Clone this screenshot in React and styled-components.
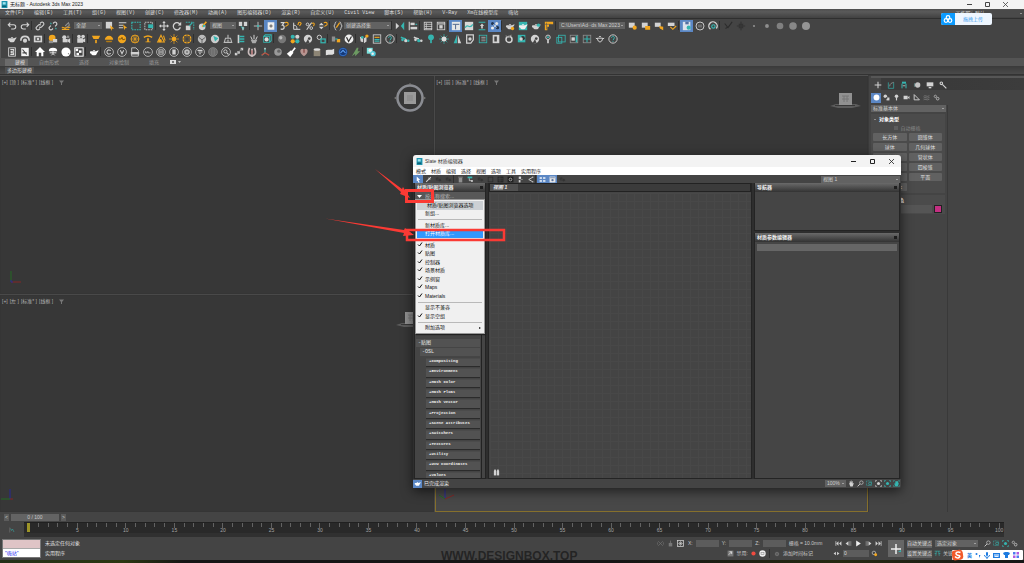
import React from "react";
import styled, { createGlobalStyle, css } from "styled-components";

const W = "#d2d2d2";
const T = "#35b5b0";
const O = "#f2a61e";
const G = "#8f8f8f";

const Global = createGlobalStyle`
  *, *::before, *::after { box-sizing: border-box; }
  body { margin: 0; background: #444; overflow: hidden; }
  #root { min-height: 100vh; display: flex; flex-direction: column; }
  body, button, input, select {
    font-family: "Liberation Sans", "Noto Sans CJK SC", sans-serif;
    font-size: 5px;
    line-height: 7px;
  }
  button { border: 0; padding: 0; margin: 0; background: none; color: inherit; text-align: left; }
  a { color: inherit; text-decoration: none; }
  ul { list-style: none; margin: 0; padding: 0; }
  h2, h3, p { margin: 0; font-size: inherit; }
`;

/* ---------- icons, drawn on a 12 x 12 grid ---------- */
const ln = (d, c = W, w = 1.3, extra = {}) => (
  <path d={d} fill="none" stroke={c} strokeWidth={w} {...extra} />
);
const fl = (d, c = W) => <path d={d} fill={c} />;
const dot = (x, y, r, c = W) => <circle cx={x} cy={y} r={r} fill={c} />;
const ring = (x, y, r, c = W, w = 1.1) => (
  <circle cx={x} cy={y} r={r} fill="none" stroke={c} strokeWidth={w} />
);
const box = (x, y, w, h, c = W) => <rect x={x} y={y} width={w} height={h} fill={c} />;
const frame = (x, y, w, h, c = W, s = 1) => (
  <rect x={x} y={y} width={w} height={h} fill="none" stroke={c} strokeWidth={s} />
);
const pot = (c = W) => fl("M3 5h5.500c1 0 1.500-1 3-1-.4 2-1.300 2.500-2 3.500C9 9.500 8 10 6 10S3 9.500 2.700 8C1 8 .5 5.500 2 5zM5 3.500h2L7.500 4.500h-3z", c);

const ICONS = {
  undo: ln("M4 2L1.500 4.500L4 7M1.500 4.500H8a2.500 2.500 0 0 1 0 5H5"),
  redo: ln("M8 2l2.500 2.500L8 7M10.500 4.500H4a2.500 2.500 0 0 0 0 5h3"),
  link: ln("M5 7a2 2 0 0 0 3 0l2-2a2 2 0 0 0-3-3L6 3M7 5a2 2 0 0 0-3 0L2 7a2 2 0 0 0 3 3l1-1"),
  unlink: <>{ln("M6 3l1-1a2 2 0 0 1 3 3L8.500 6.500M3.500 5.500L2 7a2 2 0 0 0 3 3l1-1")}{ln("M3 2l1 2M9 8l1 2", T)}</>,
  bind: <>{ln("M1 8c2-2 3 2 5 0s3 1 5-1M1 10h9", O)}{ln("M5 6l4-4 1 3-3 3", G)}</>,
  pick: <>{box(1, 1, 7.500, 8)}{fl("M6 5l5 4-2.500.3L7.500 12z", O)}</>,
  pickName: <>{ln("M1 2h9M1 5h5M1 8h5")}{fl("M6 4l5 4.500-2.500.3L7.500 11z", O)}</>,
  marquee: ln("M1 1.500h10v9H1z", T, 1.3, { strokeDasharray: "2 1" }),
  crossing: <>{ln("M1 1.500h9v9H1z", W, 1, { strokeDasharray: "2 1" })}{box(5, 4, 6, 4.500, T)}</>,
  move: <>{ln("M6 1v10M1 6h10")}{fl("M6 0l2 2.500H4zM6 12l2-2.500H4zM0 6l2.500-2v4zM12 6L9.500 4v4z")}</>,
  rotate: <>{ln("M9.500 4A4.300 4.300 0 1 0 10 7.500", W, 1.5)}{fl("M11 1v4.500H7z")}</>,
  scale: <>{ln("M1 1.500h9.500v9", T, 1.1, { strokeDasharray: "2 1" })}{box(1, 5.500, 5.500, 5.500)}{ln("M5 6l4-4", T)}</>,
  place: <>{dot(5, 7, 4)}{ln("M5 7L10 1", O, 2)}{dot(7, 6, 1.4, T)}</>,
  pivot: <>{box(1, 1, 4, 5)}{box(7, 1, 4, 5)}{fl("M3 7v4M6 11L3 6l5 2z", T)}{ln("M6 11V7", W)}</>,
  manip: <>{ln("M6 1v10M1 6h10", W, 1)}{dot(6, 6, 1.3, T)}</>,
  keys: <>{box(2, 1.500, 8, 9, "#efefef")}{ln("M6 4v4M4 6h4", "#444", 1)}</>,
  snap3: <>{ln("M2 2h4L4 5c3 0 3 5-.5 5L2 9.500", W, 1.5)}{ln("M7 2c3-1 4 0 4 2S8 5 8 7", O, 1.3)}</>,
  snapA: <>{ln("M2 2v8h8M2 5c3 0 4 2 4 5", W, 1.2)}{ln("M7 5l1-3c1-1 3 0 3 1L9 6", O, 1.3)}</>,
  snapP: <>{ring(3, 4, 1.600)}{ring(7.500, 8.500, 1.600)}{ln("M2 10.500L8 2")}{ln("M8 3c3-2 4 1 2 3", O)}</>,
  snapS: <>{fl("M1 5l3-3 3 3zM1 7h6l-3 3z")}{ln("M7 2c3-1 4 0 4 2S8 5 8 7", O, 1.3)}</>,
  sets: <>{ln("M4 1C2 1 3 5 1 6c2 1 1 5 3 5M8 1c2 0 1 4 3 5-2 1-1 5-3 5", W, 1.1)}{ln("M4 8l4-6", O, 1.5)}</>,
  mirror: <>{fl("M1 2l4 4-4 4z")}{fl("M11 1v10L7 6z", T)}</>,
  align: <>{ln("M1.500 1v10")}{box(3, 2, 5, 3)}{box(3, 7, 8, 3)}{ln("M9 4h2", T)}</>,
  layers: <>{frame(1.500, 1.500, 9, 9)}{ln("M2 4h9M2 6.500h9M2 9h9M4 2v8", W, .9)}</>,
  layer2: <>{frame(1.500, 1.500, 9, 9)}{box(4, 5, 4, 4)}{ln("M2 3.500h9")}</>,
  ribbon: <>{box(1, 1, 10, 10, "#e7e7e7")}{ln("M2 4h8M5.500 4v6", "#556b90", 1.2)}</>,
  curve: <>{box(1, 1, 10, 10, "#d8d8d8")}{ln("M1.500 8c3-6 5 3 9-4", T, 1.5)}</>,
  schem: <>{ln("M2 1.500h8M2 10.500h8", T, 1.2)}{fl("M6 3l2.500 3h-5zM5 5h2v4H5z")}</>,
  mat: <>{dot(3, 3, 1.800, "#21344f")}{dot(8, 3, 1.800, "#e5e5e5")}{dot(3, 8.500, 1.800, "#eee")}{dot(9, 8, 2, "#21344f")}{ln("M4 4l4 4M4 8l4-4", "#e5e5e5", .8)}</>,
  potGear: <>{pot()}{dot(9, 9, 2, O)}</>,
  potFrame: <>{box(1, 1, 10, 10, T)}{pot("#eee")}</>,
  potT: <>{pot()}{dot(9, 5, 2, T)}</>,
  potG: pot("#d5d5d5"),
  state: <>{fl("M1 1h10v3H6v3H4v4H1z", O)}{ln("M3 2v8M1 4h8", "#555", .7)}</>,
  box1: <>{box(1, 2, 7, 6)}{dot(8, 8, 2.500, O)}</>,
  box2: <>{box(1, 2, 7, 6)}{box(5, 6, 6, 4.500, O)}</>,
  box3: <>{box(1, 2, 7, 5)}{fl("M6 6l5 1v4l-4-2z", O)}</>,
  box4: <>{box(1, 2, 8, 4)}{ln("M4 7l3 3 4-4", O)}</>,
  save: <>{box(1, 1, 9, 10, "#dde3ec")}{box(4, 1, 4, 3, "#536f9f")}{dot(8, 8, 2.500, T)}</>,
  ringB: <>{ring(6, 6, 4.800)}{ln("M3.500 5h5M3.500 7h5", G, 1)}</>,
  ringT: <>{ln("M3 10a5 5 0 1 1 7-1", W, 1.6)}{ring(6.500, 6.500, 2, T, 1.4)}</>,
  dBrush: ln("M2 3l4 5 5-7M3 9l3-2", "#2c2c2c"),
  dMove: ln("M6 1v10M1 6h10M4 4h4v4H4z", "#333"),
  s1: dot(6, 6, 1.300, G), s2: dot(6, 6, 2.300, G), s3: dot(6, 6, 4, "#808080"),
  s4: dot(6, 6, 4.500, "#888"), s5: dot(6, 6, 4.800, "#959595"),
  cloud: <>{ln("M1 8c0-7 10-7 10 0", W, 2)}{dot(6, 8, 2.500)}</>,
  cam: <>{box(1, 2, 10, 8)}{box(3, 4, 6, 4, "#444")}{dot(6, 6, 1.600)}</>,
  coins: <>{dot(5, 5, 4, O)}{box(6, 6, 5, 4)}{box(1, 8, 5, 3, G)}</>,
  film: <>{dot(4, 4, 2.500)}{box(2, 6, 6, 4)}{fl("M8 7l3-2v6L8 9z")}{dot(8.500, 3.500, 1.600, G)}</>,
  movie: <>{dot(3.500, 3, 2.200)}{dot(8.500, 3, 2.200)}{box(1.500, 5, 7, 5.500)}{fl("M8 7l3-2v5L8 9z")}</>,
  lamp: <>{fl("M1 2h10l-2 4H3z", O)}{box(5, 7, 2, 4, O)}</>,
  dome: <>{fl("M1 7a5 5 0 0 1 10 0z", O)}{fl("M2 8h8l-1 2H3z", "#b17a15")}</>,
  orb: <>{dot(6, 6, 5, O)}{ln("M2 6h3l1-2 1 3 3-1", "#6b4a0e", 1)}</>,
  mesh: <>{ring(6, 6, 4.700, O)}{ln("M1 6h10M6 1v10M3 2l6 8M9 2L3 10", O, .8)}</>,
  plane: <>{ln("M1 4c3-2 7-2 10 0", O, 1.8)}{fl("M5 5h2v5H5zM3 9h6v1H3z", O)}</>,
  ies: <>{ln("M6 1.500l4 8H2z", O)}{dot(5, 8, 2, O)}{ln("M9 2l2 6", O)}</>,
  sun: <>{dot(6, 6, 2.600, O)}{ln("M6 0v12M0 6h12M2 2l8 8M10 2l-8 8", O, .8)}</>,
  sun2: <>{ring(6, 6, 2.600, O, .8)}{ring(6, 6, 4.600, O, 1.600)}{ln("M6 0v12M0 6h12M2 2l8 8M10 2l-8 8", "#444", .8)}{dot(6, 6, 2, "#444")}</>,
  ball: <>{dot(6, 6, 5, "#bbb")}{ln("M2 4l4 3 4-3M6 7v4", "#555", 1)}</>,
  ballT: <>{dot(6, 6, 5, "#ccc")}{fl("M4 2l6 3-4 4z", T)}</>,
  cone: <>{ln("M6 1v4M3 5h6l1.500 5h-9z", "#bbb")}{dot(6, 8, 1.500, G)}</>,
  tree: <>{fl("M2 1h2v10H2z")}{ln("M4 3h6M4 6h6M4 9h6", T, 1.6)}</>,
  fur: <>{ln("M2 3l2 4M6 1v5M10 3L8 7", W, 1.2)}{fl("M2 7h8l-2 4H4z", "#aaa")}</>,
  cube: <>{frame(2, 3, 7, 7, T)}{ln("M2 3l2-2h7v7L9 10", T)}{dot(5.500, 6.500, 2.500, "#ddd")}</>,
  sphere: <>{dot(6, 6, 5, "#777")}{dot(4.500, 4.500, 2, "#bdbdbd")}</>,
  four: <>{dot(3.300, 3.300, 2.500, T)}{dot(8.800, 3.300, 2.500)}{dot(3.300, 8.800, 2.500, O)}{dot(8.800, 8.800, 2.500, T)}</>,
  pie: <>{dot(6, 6, 5)}{dot(7.500, 5.500, 1.600, "#444")}{fl("M6 6l2 5H3z", "#444")}</>,
  chain: <>{ring(4, 4, 2.600)}{frame(6, 6, 5, 4.500, T, 1.5)}</>,
  conv: <>{box(1, 3, 4, 6, G)}{box(7, 6, 4, 4, O)}{ln("M5 6h3", T)}</>,
  vray: <>{dot(6, 6, 5.300, "#eee")}{ln("M3 4l2.500 5L9 3", "#333", 1.5)}</>,
  light3: <>{fl("M1 3l4 2v5L2 9zM6 5l3-2v6l-3 2z")}{dot(9.500, 2.500, 2, O)}{dot(4, 4, 1.600, T)}</>,
  notes: <>{frame(1.500, 1, 9, 10)}{ln("M3 4h6", O)}{ln("M3 6.500h6M3 8.500h6", T)}</>,
  help: <>{ring(6, 6, 5)}{ln("M4.300 4.500c0-2.500 3.500-2 3.400 0C7.700 6 6 6 6 7.500M6 8.500v1", T, 1.2)}</>,
  ani1: <>{ln("M1 4l3 1 3 1", T, 2)}{dot(3, 7, 1.600, T)}{dot(7, 8, 2)}{dot(10, 8, 1.500, T)}</>,
  ani2: <>{ln("M1 4l3 1 3 1", W, 2)}{dot(3, 7, 1.600, W)}{dot(7, 8, 2, T)}{dot(10, 8, 1.500)}</>,
  bulbT: <>{dot(6, 4, 3.500, T)}{box(5, 7, 2, 4, T)}</>,
  sunW: <>{ln("M6 0v12M0 6h12M2 2l8 8M10 2l-8 8", T, .8)}{dot(6, 6, 3, "#ddd")}</>,
  coneT: <>{fl("M6 1v10H2z", T)}{fl("M7 1v10h4z", W)}</>,
  clip: <>{ln("M2 1h8v6L7 11H2z", W, 1.5)}{dot(6, 6, 2)}</>,
  list: <>{frame(1.500, 1.500, 9, 9, T)}{ln("M4 4h5M4 6h5M4 8h5", G)}</>,
  door: <>{box(2, 1, 8, 10)}{box(4, 3, 3, 6, "#444")}</>,
  swirl: <>{ring(6, 6.500, 3.600, W, 1.800)}{ln("M2 2l3 2 4-3", G)}</>,
  tOrb: <>{box(1, 1, 9, 9, T)}{dot(7, 5, 2.500, "#333")}{dot(5, 6, 2)}</>,
  bulb: <>{ring(6, 4, 2.700)}{ln("M6 7v4", W, 2)}{dot(6, 4, 1.200, T)}</>,
  win: <>{frame(3, 1.500, 8, 8, T)}{frame(1, 4, 6, 7, T)}</>,
  win2: <>{frame(1.500, 1.500, 9, 9, G)}{box(3, 4, 4, 4)}{box(8, 2, 2, 8, T)}</>,
  gridT: <>{frame(1.500, 1.500, 9, 9, G)}{ln("M6 2v8M2 6h8", T)}</>,
  pot2: ln("M3 5h6c0 6-6 6-6 0zM9 6l2-1M3 6L1 5M5 3h2", W, 1.2),
  docS: <>{frame(2, 1, 8, 10, "#ddd")}{ln("M4 3h4v2H5v2h3v2H4", "#ddd")}</>,
  docX: <>{box(1.500, 1, 9, 10, "#f4f4f4")}{ln("M3 3l5 6M3 7h5", "#444", 1.400)}</>,
  house: fl("M6 0l6 6h-2v5H7.500V7h-3v4H2V6H0z", "#fff"),
  table: <>{fl("M1 5a5 4 0 0 1 10 0z", "#fff")}{ln("M6 5v3M2 7h8M4 10l2-2 2 2", "#fff", 1)}</>,
  white: <>{dot(6, 6, 5.500, "#fff")}{dot(9, 8, .8, "#888")}</>,
  checker: <>{frame(1, 1, 10, 10, "#fff", 1.200)}{box(2, 2, 3, 3, "#fff")}{box(6, 4, 3, 3, "#fff")}{box(3, 7, 3, 3, "#fff")}</>,
  potW: pot("#fff"),
  cC: <>{ring(6, 6, 5.300, W, .9)}{ln("M8 4.500a2.500 2.500 0 1 0 0 3")}</>,
  cV: <>{ring(6, 6, 5.300, W, .9)}{ln("M4 4l2 4 2-4")}</>,
  file: <>{ln("M2 11V1h5l3 3v7z", W, 1)}{box(1, 6, 10, 3)}</>,
  cLine: <>{ring(6, 6, 5.300, W, .9)}{ln("M3 5v2h2V5M6 5v2h3", W, .8)}</>,
  cBox: <>{ring(6, 6, 5.300, W, .9)}{frame(3.500, 3.500, 5, 5)}{ln("M4 6h4")}</>,
  cGrid: <>{ring(6, 6, 5.300, W, .9)}{box(4, 3, 4, 6)}</>,
  cFlower: <>{ring(6, 6, 5.300, W, .9)}{dot(6, 6, 3.400, "#bbb")}{dot(6, 6, 1, "#444")}</>,
  cQ: <>{ring(6, 6, 5.300, W, .9)}{ln("M3 4h6M4 6h5M5 8h2", W)}</>,
  cHatch: <>{dot(6, 6, 5, "#686868")}{ring(6, 6, 5.300, "#999", .8)}{ln("M4 2v8M6 1v10M8 2v8", "#999", .5)}</>,
  cSearch: <>{ring(6, 6, 5.300, W, .9)}{ring(5.300, 5.300, 1.900)}{ln("M7 7l2 2")}</>,
  steps: <>{box(1, 7, 3, 3)}{box(4, 5, 3, 3)}{box(8, 1, 3, 3)}{ln("M3 8l7-6", G, 1)}</>,
  horse: <>{ln("M3 1C0 8 3 10 6 11c3-1 6-3 3-10M6 2v8", "#c9bcbc", 2)}{ln("M6 4v5", "#b05a5a")}</>,
  axis: <>{ln("M6 1v6l-4 3", T)}{ln("M6 7l5 3M6 7l-4 3", "#c0503f", 1.5)}{dot(6, 2, 1)}</>,
  stone: <>{dot(6, 6, 4.500, "#999")}{dot(7, 5, 2, "#666")}</>,
  brush: <>{fl("M1 8l5-4 3 3-4 5z", "#fff")}{ln("M7 6l4-5", "#fff", 2)}</>,
  heart: <>{fl("M6 11C0 7 1 2 4 2l2 1 2-1c3 0 4 5-2 9z", "#b79490")}{ln("M6 3v4", "#7c3b38")}</>,
  pail: <>{fl("M2 3h8v8H2z", "#8d8575")}<ellipse cx="6" cy="3" rx="4" ry="1.500" fill="#ddd" /></>,
  paper: fl("M1 4c3-2 5 1 10-2v6c-4 3-6 0-10 2z", "#dedede"),
  okay: <>{dot(6, 6, 5.500, "#163a78")}{ring(6, 6, 4.500, "#3b78cf", 1)}{ln("M3 7l3-3 3 3", "#5b9dee")}</>,
  leaf: fl("M1 11L7 1h2L8 5l3 0-6 6 0-3z", "#6c9a62"),
  globes: <>{box(1, 1, 7, 7, "#7de4e0")}{dot(8.500, 8, 3.200, "#50c8d8")}{dot(5, 4, 2, "#eee")}{dot(8, 8, 1.500, "#eee")}</>,
  plus: ln("M6 1v10M1 6h10", W, 1.6),
  modify: <>{ln("M2 2v9h8V2", T, 1)}{ln("M4 8c0-4 3-5 6-6", G)}</>,
  hier: <>{box(3, 1, 6, 3, T)}{ln("M3 4v7M9 4v7", T, 1.500)}{box(4, 6, 4, 2, G)}</>,
  motion: <>{dot(7, 6, 4, "#c4c4c4")}{ln("M3 3a5 5 0 0 0 0 6", "#6b8f8e")}</>,
  display: <>{box(1, 2, 10, 6)}{box(4, 9, 4, 2)}</>,
  wrench: <>{ring(3.500, 3.500, 1.900, W, 1.6)}{ln("M5 5l6 6", W, 1.8)}</>,
  disc: dot(6, 6, 5, "#fff"),
  shapes: <>{dot(4, 4, 3)}{box(6, 6, 5, 5)}{dot(6, 7, 1.500, "#444")}</>,
  bulbS: <>{dot(6, 4, 3)}{box(5, 6, 2, 5)}</>,
  video: <>{box(1, 3, 7, 6)}{fl("M8 6l3-3v6z")}</>,
  tri: ln("M2 1v9h9z", W, 1.6),
  waves: ln("M1 4c3-3 5 2 10-1M1 7c3-3 5 2 10-1M1 10c3-3 5 2 10-1", G, 1),
  gears: <>{ring(4, 4, 2, "#aaa", 1.500)}{ring(8, 8, 2.300, "#bbb", 1.500)}</>,
  cursor: fl("M3 1l6 6H6l2 4-2 .5L4.500 8 3 9z", "#fff"),
  dropper: ln("M2 10l5-5M6 3l3 3M8 4l2-2", W, 1.8),
  ghost: <>{dot(4, 5, 3, "#363636")}{dot(8, 7, 3, "#333")}{ring(8, 7, 3, "#4c4c4c", .8)}</>,
  trash: <>{box(3, 3, 6, 8, G)}{ln("M2 2h8", G)}</>,
  assign: <>{box(1, 1, 8, 3, T)}{ln("M4 4v4h4", W)}{box(7, 7, 3, 3)}</>,
  darkF: frame(2, 2, 8, 8, "#2d2d2d", 1.3),
  darkG: <>{box(1, 1, 10, 10, "#292929")}{ln("M2 4h8M2 7h8M5 1v10", "#565656", .7)}</>,
  zero: <>{box(1, 1, 10, 10, "#222")}{ring(6, 6, 2.300)}</>,
  treeV: <>{box(3, 1, 4, 4)}{box(3, 7, 3, 4)}{ln("M6 6h4", G)}</>,
  share: ln("M10 2L3 6l7 4M10 1v2M10 9v2", W, 1.5),
  grid4: <>{box(1, 2, 4, 3, "#dbe5f2")}{box(7, 2, 4, 3, "#dbe5f2")}{box(1, 7, 4, 3, "#dbe5f2")}{box(7, 7, 4, 3, "#dbe5f2")}</>,
  preview: <>{box(1, 1, 10, 10, "#e8e8e8")}{dot(6, 7, 2, "#58739f")}{ln("M2 3h8", "#58739f")}</>,
  binoc: <>{box(1.500, 3, 4, 8)}{box(6.500, 3, 4, 8)}{box(2, 1, 3, 3)}{box(7, 1, 3, 3)}</>,
  hand: fl("M3 5V2h1v3l1-4h1v4l1-3h1v4l2-1-2 6H4L2 6z"),
  zoom: <>{ring(7.500, 4.500, 3)}{ln("M5 7l-4 4", W, 1.600)}</>,
  zoomR: <>{ln("M1 1.500h8v8H1z", T, 1, { strokeDasharray: "1.500 1" })}{ring(7, 6, 2.500, T)}</>,
  zoomE: <>{ln("M1 3V1h2M9 1h2v2M11 9v2H9M3 11H1V9", W)}{dot(6, 6, 2.600)}</>,
  zoomET: <>{ln("M1 3V1h2M9 1h2v2M11 9v2H9M3 11H1V9", T, 1.400)}{dot(6, 6, 2.600, T)}</>,
  handT: <>{ln("M1 3V1h2M9 1h2v2M11 9v2H9M3 11H1V9", T, 1)}{fl("M4 2h5v3l1 1-2 5H4L2 6h2z", T)}</>,
  isolate: ln("M2 2l8 8M10 2l-8 8M1 4v4M11 4v4", "#777", 1),
  lock: <>{box(3, 5, 6, 6, "#777")}{ln("M6 1v5", "#777")}</>,
  transf: <>{frame(1, 1, 10, 10, W, 1.3)}{ln("M6 2v8M2 6h8M3 3l6 6M9 3l-6 6", W, 1)}</>,
  first: <>{ln("M1.500 2v8", W)}{fl("M6 2v8L2 6zM11 2v8L7 6z")}</>,
  prev: <>{fl("M6 2v8L1 6z")}{ln("M8 2v8M10 2v8", G)}</>,
  play: fl("M2 1l8 5-8 5z", "#eee"),
  next: <>{fl("M6 2v8l5-4z")}{ln("M2 2v8M4 2v8", G)}</>,
  last: <>{ln("M10.500 2v8")}{fl("M1 2v8l4-4zM6 2v8l4-4z")}</>,
  pair: fl("M5 3v6L1 6zM7 3v6l4-3z"),
  cfg: <>{ring(5, 5, 3)}{dot(8, 8, 2.500, O)}</>,
  rec: dot(6, 6, 5, "#f04b40"),
  whiteBox: <>{dot(6, 6, 5.500, "#eee")}{frame(3.500, 4, 5, 4, "#888")}</>,
  degrade: <>{box(1, 1, 10, 10, "#777")}{ln("M3 8L8 3M4 3h4v4", "#eee")}</>,
  tag: <>{ring(6, 6, 3.500, G)}{dot(6, 6, 1.400, G)}</>,
  keyT: ln("M1 2h10M3 10l1-8M8 2l1 8M1 6h3M8 6h3", T, 1),
  app: <>{box(1, 0, 10, 12, "#1c93ad")}{box(3, 2, 5, 4, "#9fe3ee")}{box(2, 8, 7, 2, "#0b5566")}</>,
  curveT: <>{ln("M1.500 1v10", G, .8)}{ln("M3 3l2 4 2-3 3 6", T, 1)}</>,
};

const Svg = styled.svg`
  display: block;
  flex: none;
  width: ${(p) => p.$size}px;
  height: ${(p) => p.$size}px;
`;
const Icon = ({ name, size = 10 }) => (
  <Svg viewBox="0 0 12 12" $size={size} aria-hidden="true">{ICONS[name]}</Svg>
);

/* ---------- shared controls ---------- */
const row = css`display: flex; align-items: center;`;

const ToolButton = styled.button`
  ${row}
  justify-content: center;
  flex: none;
  width: ${(p) => p.$w || 13}px;
  height: ${(p) => p.$h || 12}px;
  background: ${(p) => (p.$on ? "#5b87c4" : "transparent")};
`;
const Sep = styled.span`
  flex: none;
  width: 1px;
  height: 9px;
  margin-right: 1px;
  background: #2f2f2f;
`;
const SelectBox = styled.span`
  position: relative;
  flex: none;
  display: flex;
  width: ${(p) => p.$w};
  height: ${(p) => p.$h || 7}px;
  margin: ${(p) => p.$m || "0"};
  background: ${(p) => p.$bg || "#626262"};
  color: ${(p) => p.$fg || "#cfcfcf"};
  &::after {
    content: "";
    position: absolute;
    right: 2px;
    top: 3px;
    border: 1px solid transparent;
    border-top-color: #ddd;
    border-bottom: 0;
  }
  select {
    appearance: none;
    width: 100%;
    border: 0;
    margin: 0;
    padding: 0 5px 0 2px;
    background: none;
    color: inherit;
    outline: 0;
  }
`;
const Select = ({ label, value, ...rest }) => (
  <SelectBox {...rest}>
    <select aria-label={label} defaultValue={value}><option>{value}</option></select>
  </SelectBox>
);

/* ---------- application chrome ---------- */
const Shell = styled.div`
  position: relative;
  flex: 1;
  display: flex;
  flex-direction: column;
  color: #c9c9c9;
  background: #444;
`;
const TitleBar = styled.header`
  ${row}
  height: 9px;
  padding: 0 16px 0 1px;
  gap: 2px;
  background: #f3f3f3;
  color: #222;
`;
const WindowControls = styled.div`
  ${row}
  margin-left: auto;
  gap: ${(p) => p.$gap}px;
`;
const WinButton = styled.button`
  width: 5px;
  height: 5px;
  svg { display: block; width: 5px; height: 5px; }
`;
const MenuBar = styled.nav`
  ${row}
  height: 10px;
  padding-left: 5px;
  background: linear-gradient(#4e4e4e, #5a5a5a 30%, #414141);
  color: #dcdcdc;
  border-bottom: 1px solid #2f2f2f;
  button { margin-right: 10px; font-family: "Liberation Mono", "Noto Sans CJK SC", monospace; white-space: nowrap; }
`;
const Workspace = styled.label`
  ${row}
  margin-left: auto;
  gap: 1px;
`;
const Toolbars = styled.div`
  padding-left: 4px;
  border-left: 1px solid #5a5a5a;
  background: #444;
`;
const ToolRow = styled.div`
  ${row}
  height: 13px;
`;
const RibbonTabs = styled.div`
  ${row}
  height: 8px;
  padding-left: 5px;
  background: #545454;
  color: #999;
`;
const RibbonTab = styled.button`
  height: 7px;
  width: ${(p) => p.$w}px;
  padding-left: ${(p) => (p.$on ? 10 : 1)}px;
  margin-right: ${(p) => p.$gap}px;
  background: ${(p) => (p.$on ? "#6b6b6b" : "none")};
  color: ${(p) => (p.$on ? "#ddd" : "inherit")};
`;
const RibbonPanel = styled.div`
  ${row}
  height: 9px;
  padding-left: 5px;
  background: linear-gradient(#3a3a3a, #4a4a4a);
  border-bottom: 1px solid #333;
  button { background: #505050; padding: 0 2px; color: #ddd; }
`;

const Main = styled.main`
  display: flex;
  flex: 1;
  min-height: 0;
`;
const Viewports = styled.div`
  flex: 1;
  display: grid;
  grid-template: 1fr 1fr / 1fr 1fr;
  gap: 1px;
  background: #494949;
  border-top: 1px solid #4f4f4f;
`;
const Viewport = styled.section`
  position: relative;
  display: flex;
  flex-direction: column;
  background: ${(p) => (p.$active ? "#484848" : "#373737")};
  border: 1px solid ${(p) => (p.$active ? "#86702c" : "#353535")};
`;
const ViewLabel = styled.h2`
  ${row}
  gap: 2px;
  padding: 2px 1px;
  color: #b2b2b2;
  font-weight: 400;
  white-space: nowrap;
  svg { margin-left: 4px; }
`;
const Cube = styled.svg`
  position: absolute;
  right: ${(p) => p.$right}px;
  top: ${(p) => p.$top}px;
  width: 32px;
  height: 30px;
`;
const AxisMark = styled.svg`
  width: 20px;
  height: 18px;
  margin-top: auto;
  margin-bottom: ${(p) => p.$bottom}px;
`;

const RoundCube = () => (
  <Cube viewBox="0 0 32 30" $right={7} $top={6}>
    <circle cx="16" cy="15" r="12.500" fill="none" stroke="#8a8c92" strokeWidth="2.500" />
    <path d="M16 0l2 2h-4zM0 15l3-2v4zM32 15l-3-2v4z" fill="#777" />
    <rect x="10" y="9" width="12" height="12" fill="#9a9a9a" />
    <path d="M14 12v6M16 12v6M18 12v6" stroke="#858585" />
  </Cube>
);
const FlatCube = () => (
  <Cube viewBox="0 0 32 30" $right={6} $top={6}>
    <path d="M1 23l6-2h20l5 2-9 2H9z" fill="#5c5c5c" />
    <path d="M6 22h20v1H6z" fill="#383838" />
    <rect x="10" y="10" width="13" height="12" fill="#919191" />
    <path d="M13 13h7M13 16h7M15 13v6M18 13v6" stroke="#777" />
  </Cube>
);

const Panel = styled.aside`
  display: flex;
  flex-direction: column;
  width: 156px;
  padding-left: 2px;
  border-top: 1px solid #3b3b3b;
  border-left: 1px solid #3a3a3a;
  background: #444;
`;
const PanelTabs = styled.div`
  ${row}
  height: 14px;
  padding-top: 2px;
  background: linear-gradient(90deg, #444 10px, #3a3a3a 10px 76px, #3c3c3c);
  border-top: 2px solid #565656;
`;
const PanelCats = styled.div`
  ${row}
  height: 15px;
`;
const PanelColumn = styled.div`
  flex: 1;
  width: 77px;
  border-right: 1px solid #393939;
`;
const Rollout = styled.section`
  width: 74px;
  margin-top: 2px;
  padding: 2px 3px 0 2px;
  background: #4b4b4b;
  h3 { color: #fff; padding-left: 6px; position: relative; }
  h3::before { content: ""; position: absolute; left: 1px; top: 3px; border: 1px solid transparent; border-top-color: #ccc; }
`;
const AutoGrid = styled.label`
  ${row}
  justify-content: center;
  gap: 2px;
  height: 10px;
  color: #858585;
  input { appearance: none; margin: 0; width: 4px; height: 4px; background: #5d5d5d; }
`;
const ObjectGrid = styled.div`
  display: grid;
  grid-template-columns: 1fr 1fr;
  gap: 2px;
  padding-bottom: 2px;
  button { height: 8px; background: #616161; text-align: center; color: #ddd; border-radius: 1px; }
`;
const NameRow = styled.div`
  ${row}
  gap: 2px;
  height: 10px;
  input { min-width: 0; flex: 1; height: 8px; border: 0; background: #555; }
  button { width: 8px; height: 8px; background: #c42f82; border: 1px solid #222; }
`;

/* ---------- timeline and status ---------- */
const Slider = styled.div`
  ${row}
  height: 10px;
  padding: 0 4px;
  gap: 2px;
  button { width: 5px; height: 7px; background: #5c5c5c; text-align: center; }
  output { width: 48px; height: 7px; background: #636363; text-align: center; }
`;
const Timeline = styled.div`
  display: flex;
  height: 15px;
  padding-right: 20px;
`;
const TimelineButton = styled.button`
  ${row}
  width: 24px;
  justify-content: center;
`;
const Ruler = styled.div`
  flex: 1;
  display: flex;
  background: #292929;
  border-top: 1px solid #202020;
  border-bottom: 4px solid #303030;
`;
const Tick = styled.span`
  position: relative;
  flex: 1 1 0;
  min-width: 0;
  display: flex;
  flex-direction: column;
  align-items: center;
  color: #a5a5a5;
  line-height: 5px;
  &::before { content: ""; width: 1px; height: ${(p) => (p.$major ? 5 : 4)}px; background: #626262; }
  ${(p) => p.$current && css`&::before { width: 3px; height: 9px; background: #9c9427; flex: none; } `}
`;
const Status = styled.footer`
  position: relative;
  display: flex;
  align-items: center;
  height: 23px;
  padding-left: 2px;
`;
const Listener = styled.div`
  width: 39px;
  height: 19px;
  display: flex;
  flex-direction: column;
  background: #fff;
  border: 1px solid #777;
  input { height: 9px; width: 100%; border: 0; padding: 0 2px; color: #2525f0; background: #fff; }
  input:first-child { background: #dfc4c6; border-bottom: 1px solid #aaa; }
`;
const StatusText = styled.div`
  display: flex;
  flex-direction: column;
  gap: 3px;
  padding-left: 4px;
  color: #e2e2e2;
`;
const Watermark = styled.p`
  position: absolute;
  left: 441px;
  top: 12px;
  z-index: 1;
  font: bold 12px/14px "Liberation Sans", sans-serif;
  color: #242424;
`;
const StatusTools = styled.div`
  display: flex;
  flex-direction: column;
  gap: 1px;
  margin-left: ${(p) => (p.$push ? "auto" : "0")};
  width: ${(p) => p.$w}px;
`;
const StatusRow = styled.div`
  ${row}
  height: 9px;
  justify-content: ${(p) => p.$j || "flex-start"};
  gap: ${(p) => p.$gap || 0}px;
  padding-right: ${(p) => p.$end || 0}px;
  white-space: nowrap;
`;
const Field = styled.label`
  ${row}
  gap: 3px;
  margin-left: 3px;
  input { width: ${(p) => p.$w || 23}px; height: 7px; border: 0; padding: 0 1px; background: #5c5c5c; color: #ddd; }
`;
const BigKey = styled.button`
  ${row}
  justify-content: center;
  width: 16px;
  height: 17px;
  margin: 0 3px 0 4px;
  background: #666;
`;
const KeyTools = styled.div`
  width: 117px;
  display: flex;
  flex-direction: column;
  gap: 1px;
`;
const KeyButton = styled.button`
  width: 25px;
  height: 8px;
  background: #606060;
  text-align: center;
  color: #ddd;
`;
const BottomEdge = styled.div`
  height: 3px;
  background: linear-gradient(90deg, #243018, #2b3712 12%, #151515 18% 60%, #262a12 82%, #161616);
`;

/* ---------- overlays ---------- */
const Upload = styled.button`
  position: absolute;
  right: 32px;
  top: 13px;
  ${row}
  width: 51px;
  height: 12px;
  border-radius: 2px;
  overflow: hidden;
  background: #eef6ff;
  color: #3c9cf0;
  svg { width: 14px; height: 12px; background: #0c9bff; margin-right: 8px; }
`;
const Ime = styled.div`
  position: absolute;
  right: 1px;
  bottom: 3px;
  ${row}
  gap: 3px;
  width: 71px;
  height: 10px;
  background: #fff;
  color: #1d7be0;
  border-radius: 1px;
  svg { flex: none; }
`;
const Annotations = styled.svg`
  position: absolute;
  left: 320px;
  top: 164px;
  width: 190px;
  height: 80px;
  pointer-events: none;
`;

/* ---------- material editor ---------- */
const Dialog = styled.section`
  position: absolute;
  left: 413px;
  top: 155px;
  width: 488px;
  display: flex;
  flex-direction: column;
  background: #444;
  border-radius: 3px 3px 2px 2px;
  box-shadow: 0 3px 12px rgba(0, 0, 0, 0.6);
`;
const DialogTitle = styled.header`
  ${row}
  height: 12px;
  padding: 0 7px 0 3px;
  gap: 2px;
  background: #f3f3f3;
  border-radius: 3px 3px 0 0;
  color: #333;
`;
const DialogMenu = styled.nav`
  ${row}
  height: 8px;
  gap: 5px;
  padding-left: 3px;
  background: #fff;
  color: #222;
`;
const DialogTools = styled.div`
  ${row}
  height: 8px;
  padding-right: 1px;
`;
const DialogBody = styled.div`
  display: grid;
  grid-template-columns: 72px 1fr 146px;
  gap: 2px;
  height: 296px;
  padding: 0 1px 0 1px;
  background: #2e2e2e;
`;
const Dock = styled.div`
  display: flex;
  flex-direction: column;
  min-height: 0;
  overflow: hidden;
  background: #454545;
  border: 1px solid #242424;
  border-top: 0;
`;
const DockHead = styled.h2`
  position: relative;
  flex: none;
  height: 9px;
  padding: 1px 2px;
  background: linear-gradient(#6a6a6a, #333);
  color: #f0f0f0;
  white-space: nowrap;
  &::after { content: ""; position: absolute; right: 2px; top: 3px; width: 3px; height: 3px; background: #1e1e1e; }
`;
const SearchRow = styled.div`
  ${row}
  height: 8px;
  gap: 3px;
  padding-left: 2px;
  background: #585858;
  input { min-width: 0; flex: 1; border: 0; padding: 0; background: none; color: #ddd; outline: 0; }
  input::placeholder { color: #bbb; }
`;
const Tree = styled.div`
  flex: 1;
  display: flex;
  flex-direction: column;
  justify-content: flex-end;
  min-height: 0;
  margin-right: 3px;
  border-right: 1px solid #222;
  font-family: "Liberation Mono", "Noto Sans CJK SC", monospace;
`;
const Branch = styled.button`
  flex: none;
  height: 8px;
  margin: 0 1px 1px ${(p) => p.$in}px;
  padding-left: 2px;
  background: #525252;
  color: #e6e6e6;
  font: inherit;
`;
const Leaves = styled.ul`
  flex: none;
  display: flex;
  flex-direction: column;
  height: 124px;
  margin-bottom: -3px;
  padding-left: 11px;
  li {
    flex: 1 0 0;
    display: flex;
    align-items: center;
    border-bottom: 1px solid #2b2b2b;
    margin-right: 1px;
    padding-left: 3px;
    background: linear-gradient(#444 1px, #525252 2px);
    color: #f0f0f0;
    font: 700 4px/7px "Liberation Mono", monospace;
    white-space: pre;
  }
`;
const CanvasTabs = styled.div`
  height: 9px;
  background: #3b3b3b;
  border: 1px solid #222;
  button { width: 28px; padding-left: 3px; background: #505050; color: #eee; font-weight: 700; font-style: italic; display: block; }
`;
const Canvas = styled.div`
  flex: 1;
  display: flex;
  align-items: flex-end;
  padding: 1px;
  margin: 1px 0 0 1px;
  background-color: #444;
  background-image: linear-gradient(#484848 1px, transparent 1px), linear-gradient(90deg, #484848 1px, transparent 1px);
  background-size: 8px 8px;
`;
const RightDock = styled.div`
  display: grid;
  grid-template-rows: 48px 1fr;
  gap: 2px;
  input { margin: 2px; height: 7px; border: 0; background: #666; }
`;
const DialogStatus = styled.footer`
  ${row}
  height: 9px;
  padding-right: 0;
  color: #eee;
  & > span:first-of-type { margin-right: auto; padding-left: 2px; }
`;
const Menu = styled.ul`
  position: absolute;
  left: 2px;
  top: 44px;
  width: 70px;
  height: 135px;
  display: flex;
  flex-direction: column;
  padding: 1px;
  background: #f0f0f0;
  border: 1px solid #999;
  box-shadow: 1px 1px 1px #222;
  color: #111;
`;
const MenuItem = styled.li`
  flex: 1 1 0;
  min-height: 0;
  display: flex;
  background: ${(p) => (p.$kind === "hot" ? "#3297fd" : p.$kind === "head" ? "#ccd0d4" : "none")};
  color: ${(p) => (p.$kind === "hot" ? "#fff" : "inherit")};
  button {
    ${row}
    width: 100%;
    padding-left: ${(p) => (p.$kind === "head" ? 10 : 0)}px;
    white-space: nowrap;
  }
  button > span { width: ${(p) => (p.$kind === "head" ? 0 : 8)}px; flex: none; }
  button > i { margin-left: auto; margin-right: 2px; border: 1px solid transparent; border-left: 2px solid #111; border-right: 0; }
`;
const MenuRule = styled.li`
  height: 1px;
  margin: 1px;
  background: #b9b9b9;
`;

const sel = (w, value, m) => ({ w, value, m });
const ROW1 = ["undo", "redo", "|", "link", "unlink", "bind", sel("28px", "全部", "0 1px 0 2px"), "pick", "pickName", "marquee", "crossing", "|", "move", "rotate", "scale", "place", sel("26px", "视图", "0 0 0 1px"), "pivot", "|", "manip", "*keys", "snap3", "snapA", "snapP", "snapS", "|", "sets", sel("47px", "创建选择集", "0"), "|", "mirror", "align", "|", "layers", "layer2", "|", "*ribbon", "curve", "schem", "*mat", "|", "potGear", "potFrame", "potT", "state", "|", sel("66px", "C:\\Users\\Ad··ds Max 2023", "0 1px 0 2px"), "box1", "box2", "box3", "box4", "|", "*save", "ringB", "ringT", "|", "dBrush", "dMove", "s1", "s2", "s3", "s4", "s5"];
const ROW2 = ["potG", "cloud", "cam", "|", "coins", "film", "|", "movie", "|", "lamp", "dome", "orb", "mesh", "plane", "ies", "sun", "sun2", "|", "ball", "ballT", "cone", "tree", "fur", "cube", "|", "sphere", "four", "pie", "chain", "|", "conv", "vray", "|", "light3", "notes", "help", "|", "ani1", "ani2", "bulbT", "sunW", "coneT", "clip", "list", "door", "swirl", "tOrb", "pie", "bulb", "win", "win2", "gridT", "pot2", "help"];
const ROW3 = ["docS", "docX", "|", "house", "table", "white", "checker", "|", "potW", "|", "cC", "cV", "file", "cLine", "cBox", "cGrid", "cFlower", "cQ", "cHatch", "cSearch", "steps", "horse", "axis", "stone", "brush", "heart", "pail", "paper", "okay", "leaf", "|", "globes"];

const Tools = ({ items }) => (
  <ToolRow>
    {items.map((it, i) => {
      if (it === "|") return <Sep key={i} />;
      if (typeof it === "object") return <Select key={i} label={it.value} value={it.value} $w={it.w} $m={it.m} />;
      const on = it[0] === "*";
      const name = on ? it.slice(1) : it;
      return <ToolButton key={i} $on={on} aria-label={name}><Icon name={name} size={10} /></ToolButton>;
    })}
  </ToolRow>
);

const Controls = ({ gap, color }) => (
  <WindowControls $gap={gap}>
    <WinButton aria-label="最小化"><svg viewBox="0 0 5 5"><path d="M0 2.500h5" stroke={color} /></svg></WinButton>
    <WinButton aria-label="最大化"><svg viewBox="0 0 5 5"><path d="M.5.5h4v4h-4z" stroke={color} fill="none" /></svg></WinButton>
    <WinButton aria-label="关闭"><svg viewBox="0 0 5 5"><path d="M0 0l5 5M5 0L0 5" stroke={color} strokeWidth=".8" /></svg></WinButton>
  </WindowControls>
);

const Label = ({ view }) => (
  <ViewLabel>
    <span>[+]</span><span>[{view} ]</span><span>[标准* ]</span><span>[线框 ]</span>
    <svg width="5" height="5" viewBox="0 0 5 5"><path d="M0 .5h5L3 3v2H2V3z" fill="#777" /></svg>
  </ViewLabel>
);

const MENUS = ["文件(F)", "编辑(E)", "工具(T)", "组(G)", "视图(V)", "创建(C)", "修改器(M)", "动画(A)", "图形编辑器(D)", "渲染(R)", "自定义(U)", "Civil View", "脚本(S)", "帮助(H)", "V-Ray", "Xm在线模型库", "嗨站"];
const OBJECTS = ["长方体", "圆锥体", "球体", "几何球体", "圆柱体", "管状体", "圆环", "四棱锥", "茶壶", "平面", "加强型文本"];
const CATEGORIES = ["Compositing", "Environment", "Math Color", "Math Float", "Math Vector", "Projection", "Scene Attributes", "Switchers", "Textures", "Utility", "UVW Coordinates", "Values"];
const CONTEXT = [
  ["材质/贴图浏览器选项", "head"], ["新组..."], null, ["新材质库..."], ["打开材质库...", "hot"], null,
  ["材质", "on"], ["贴图", "on"], ["控制器", "on"], ["场景材质", "on"], ["示例窗", "on"], ["Maps", "on"], ["Materials", "on"], null,
  ["显示不兼容"], ["显示空组", "on"], null, ["附加选项", "sub"],
];
const EDITOR_TOOLS = ["*cursor", "dropper", "ghost", "ghost", "|", "trash", "assign", "ghost", "darkF", "darkG", "zero", "treeV", "share", "|", "*grid4", "*preview", "ghost"];

const MaterialEditor = () => (
  <Dialog role="dialog" aria-label="Slate 材质编辑器">
    <DialogTitle><Icon name="app" size={7} /><span>Slate 材质编辑器</span><Controls gap={14} color="#222" /></DialogTitle>
    <DialogMenu>
      {["模式", "材质", "编辑", "选择", "视图", "选项", "工具", "实用程序"].map((m) => <button key={m}>{m}</button>)}
    </DialogMenu>
    <DialogTools>
      {EDITOR_TOOLS.map((t, i) => t === "|" ? <Sep key={i} /> : (
        <ToolButton key={i} $w={10} $h={8} $on={t[0] === "*"} aria-label={t.replace("*", "")}>
          <Icon name={t.replace("*", "")} size={7} />
        </ToolButton>
      ))}
      <Select label="视图" value="视图 1" $w="79px" $m="0 0 0 auto" />
    </DialogTools>
    <DialogBody>
      <Dock>
        <DockHead>材质/贴图浏览器</DockHead>
        <SearchRow>
          <svg width="5" height="3" viewBox="0 0 5 3"><path d="M0 0h5L2.500 3z" fill="#fff" /></svg>
          <input aria-label="按名称搜索" placeholder="按名称搜索..." />
        </SearchRow>
        <Tree>
          <Branch $in={1}>-贴图</Branch>
          <Branch $in={5}>-OSL</Branch>
          <Leaves>{CATEGORIES.map((c) => <li key={c}>+{c}</li>)}</Leaves>
        </Tree>
      </Dock>
      <Dock>
        <CanvasTabs><button>视图 1</button></CanvasTabs>
        <Canvas><ToolButton $w={10} $h={10} aria-label="查找"><Icon name="binoc" size={7} /></ToolButton></Canvas>
      </Dock>
      <RightDock>
        <Dock><DockHead>导航器</DockHead></Dock>
        <Dock><DockHead>材质参数编辑器</DockHead><input aria-label="材质名称" /></Dock>
      </RightDock>
    </DialogBody>
    <DialogStatus>
      <ToolButton $w={9} $h={8} $on aria-label="渲染"><Icon name="potW" size={7} /></ToolButton>
      <span>已完成渲染</span>
      <Select label="缩放" value="100%" $w="21px" $m="0 1px 0 0" />
      {["hand", "zoom", "zoomR", "zoomE", "zoomET", "handT"].map((n) => (
        <ToolButton key={n} $w={9} $h={8} aria-label={n}><Icon name={n} size={7} /></ToolButton>
      ))}
    </DialogStatus>
    <Menu>
      {CONTEXT.map((c, i) => c === null ? <MenuRule key={i} /> : (
        <MenuItem key={i} $kind={c[1]}>
          <button>
            <span>{c[1] === "on" && <svg width="6" height="5" viewBox="0 0 6 5"><path d="M1 2.500l1.500 1.500L5 .5" fill="none" stroke="#111" /></svg>}</span>
            {c[0]}{c[1] === "sub" && <i />}
          </button>
        </MenuItem>
      ))}
    </Menu>
  </Dialog>
);

export default function App() {
  return (
    <Shell>
      <Global />
      <TitleBar><Icon name="app" size={7} /><span>无标题 - Autodesk 3ds Max 2023</span><Controls gap={13} color="#444" /></TitleBar>
      <MenuBar>
        {MENUS.map((m) => <button key={m}>{m}</button>)}
        <Workspace>工作区:<Select label="工作区" value="默认" $w="51px" $bg="#4a4a4a" /></Workspace>
      </MenuBar>
      <Toolbars><Tools items={ROW1} /><Tools items={ROW2} /><Tools items={ROW3} /></Toolbars>
      <RibbonTabs>
        <RibbonTab $on $w={23} $gap={10}>建模</RibbonTab>
        <RibbonTab $w={25} $gap={15}>自由形式</RibbonTab>
        <RibbonTab $w={15} $gap={15}>选择</RibbonTab>
        <RibbonTab $w={25} $gap={15}>对象绘制</RibbonTab>
        <RibbonTab $w={15} $gap={7}>填充</RibbonTab>
        <svg width="12" height="5" viewBox="0 0 12 5"><rect width="6" height="4" fill="#ddd" /><circle cx="3" cy="2" r="1" fill="#555" /><path d="M8 1h3L9.500 3z" fill="#bbb" /></svg>
      </RibbonTabs>
      <RibbonPanel><button>多边形建模</button></RibbonPanel>

      <Main>
        <Viewports>
          <Viewport>
            <Label view="顶" /><RoundCube />
            <AxisMark viewBox="0 0 20 18" $bottom={7}><path d="M10 14V3" stroke="#246b24" /><path d="M10 14h12" stroke="#842727" /><path d="M10 12v2h2" stroke="#282895" fill="none" /></AxisMark>
          </Viewport>
          <Viewport><Label view="前" /><FlatCube /></Viewport>
          <Viewport>
            <Label view="左" /><FlatCube />
            <AxisMark viewBox="0 0 20 18" $bottom={7}><path d="M9 13V3" stroke="#282895" /><path d="M0 13h9" stroke="#246b24" /><path d="M9 13h3" stroke="#842727" /></AxisMark>
          </Viewport>
          <Viewport $active>
            <Label view="透视" />
            <AxisMark viewBox="0 0 20 18" $bottom={7}><path d="M9 13V3" stroke="#2b2b9e" /><path d="M9 13L3 9" stroke="#246b24" /><path d="M9 13l9-4" stroke="#842727" /></AxisMark>
          </Viewport>
        </Viewports>
        <Panel>
          <PanelTabs>
            {["plus", "modify", "hier", "motion", "display", "wrench"].map((n) => <ToolButton key={n} $w={13} $h={10} aria-label={n}><Icon name={n} size={8} /></ToolButton>)}
          </PanelTabs>
          <PanelCats>
            {["disc", "shapes", "bulbS", "video", "tri", "waves", "gears"].map((n, i) => <ToolButton key={n} $w={10} $h={10} $on={i === 0} aria-label={n}><Icon name={n} size={7} /></ToolButton>)}
          </PanelCats>
          <PanelColumn>
            <Select label="类别" value="标准基本体" $w="75px" />
            <Rollout>
              <h3>对象类型</h3>
              <AutoGrid><input type="checkbox" />自动栅格</AutoGrid>
              <ObjectGrid>{OBJECTS.map((o) => <button key={o}>{o}</button>)}</ObjectGrid>
            </Rollout>
            <Rollout>
              <h3>名称和颜色</h3>
              <NameRow><input aria-label="名称" /><button aria-label="颜色" /></NameRow>
            </Rollout>
          </PanelColumn>
        </Panel>
      </Main>

      <Slider><button>&lt;</button><output>0 / 100</output><button>&gt;</button></Slider>
      <Timeline>
        <TimelineButton aria-label="曲线编辑器"><Icon name="curveT" size={6} /></TimelineButton>
        <Ruler>
          {Array.from({ length: 101 }, (_, i) => (
            <Tick key={i} $major={i % 5 === 0} $current={i === 0}>{i && i % 5 === 0 ? i : ""}</Tick>
          ))}
        </Ruler>
      </Timeline>
      <Status>
        <Listener><input aria-label="宏录制器" /><input aria-label="侦听器" defaultValue={'"嗨站"'} /></Listener>
        <StatusText><span>未选定任何对象</span><span>实用程序</span></StatusText>
        <Watermark>WWW.DESIGNBOX.TOP</Watermark>
        <StatusTools $push $w={178}>
          <StatusRow>
            {["isolate", "lock", "transf"].map((n) => <ToolButton key={n} $w={10} $h={9} aria-label={n}><Icon name={n} size={7} /></ToolButton>)}
            {["X:", "Y:", "Z:"].map((n) => <Field key={n}>{n}<input /></Field>)}
            <Field as="span">栅格 = 10.0mm</Field>
          </StatusRow>
          <StatusRow $j="flex-end" $gap={3} $end={20}>
            <Icon name="degrade" size={7} /><span>禁用:</span><Icon name="rec" size={5} /><Icon name="whiteBox" size={7} /><Sep /><Icon name="tag" size={6} /><span>添加时间标记</span>
          </StatusRow>
        </StatusTools>
        <StatusTools $w={51}>
          <StatusRow>
            {["first", "prev", "play", "next", "last"].map((n) => <ToolButton key={n} $w={10} $h={9} aria-label={n}><Icon name={n} size={7} /></ToolButton>)}
          </StatusRow>
          <StatusRow>
            <Icon name="pair" size={7} />
            <Field $w={26}><input type="text" aria-label="帧" defaultValue="0" /></Field>
            <ToolButton $w={11} $h={9} aria-label="时间配置"><Icon name="cfg" size={7} /></ToolButton>
          </StatusRow>
        </StatusTools>
        <BigKey aria-label="设置关键点"><svg width="12" height="12" viewBox="0 0 12 12"><path d="M6 1v10M1 6h10" stroke="#eee" strokeWidth="1.500" /><path d="M8 9l3-2v2z" fill={T} /></svg></BigKey>
        <KeyTools>
          <StatusRow $gap={2}>
            <KeyButton>自动关键点</KeyButton>
            <Select label="选定对象" value="选定对象" $w="43px" $m="0 4px 0 1px" />
            {["zoom", "zoomR", "zoomET", "gears"].map((n) => <Icon key={n} name={n} size={7} />)}
          </StatusRow>
          <StatusRow $gap={2}>
            <KeyButton>设置关键点</KeyButton><Icon name="keyT" size={7} /><span>关键</span>
          </StatusRow>
        </KeyTools>
      </Status>
      <BottomEdge />

      <MaterialEditor />
      <Annotations viewBox="0 0 190 80" aria-hidden="true">
        <g fill="none" stroke="#fb3a34">
          <rect x="86.500" y="26.500" width="26" height="11" strokeWidth="3" />
          <rect x="87" y="66" width="97" height="10" strokeWidth="2.500" />
        </g>
        <g fill="#fb3a34">
          <path d="M55 5l27 20 1-2 7 11-10-4 1-2z" />
          <path d="M5 54.500l79 11.500 1-2 9 7-11 1 1-3z" />
        </g>
      </Annotations>
      <Upload>
        <svg viewBox="0 0 14 12"><g fill="none" stroke="#fff" strokeWidth="1.200"><circle cx="7" cy="4.500" r="1.800" /><circle cx="5" cy="7.500" r="1.800" /><circle cx="9" cy="7.500" r="1.800" /></g></svg>
        拖拽上传
      </Upload>
      <Ime>
        <svg width="12" height="12" viewBox="0 0 12 12"><rect x="0" y="1" width="11" height="10" rx="3" fill="#f2592a" transform="rotate(-8 6 6)" /><path d="M8.500 3.500C5 2 3 4 4.500 5.500S9 6 7.500 8 4 8.500 3 7.500" fill="none" stroke="#fff" strokeWidth="1.500" /></svg>
        <b>英</b>
        <svg width="6" height="6" viewBox="0 0 6 6"><circle cx="1.500" cy="2" r="1" fill="#1d7be0" /><path d="M4 3h1.500L4 6z" fill="#1d7be0" /></svg>
        <svg width="6" height="7" viewBox="0 0 6 7"><rect x="2" width="2" height="4" rx="1" fill="#1d7be0" /><path d="M.5 3c0 3 5 3 5 0M3 5v2" fill="none" stroke="#1d7be0" /></svg>
        <svg width="7" height="5" viewBox="0 0 7 5"><rect x=".5" y=".5" width="6" height="4" fill="#8fc0f4" stroke="#1d7be0" /><path d="M2 3.500h3" stroke="#fff" strokeWidth=".8" /></svg>
        <svg width="7" height="6" viewBox="0 0 7 6"><path d="M0 1l2-1h3l2 1-1 2H5v3H2V3H1z" fill="#1d7be0" /></svg>
        <svg width="6" height="6" viewBox="0 0 6 6"><path d="M0 0h2.500v2.500H0zM3.500 3.500H6V6H3.500z" fill="#4d7bef" /><path d="M3.500 0H6v2.500H3.500zM0 3.500h2.500V6H0z" fill="#b45be0" /></svg>
      </Ime>
    </Shell>
  );
}
